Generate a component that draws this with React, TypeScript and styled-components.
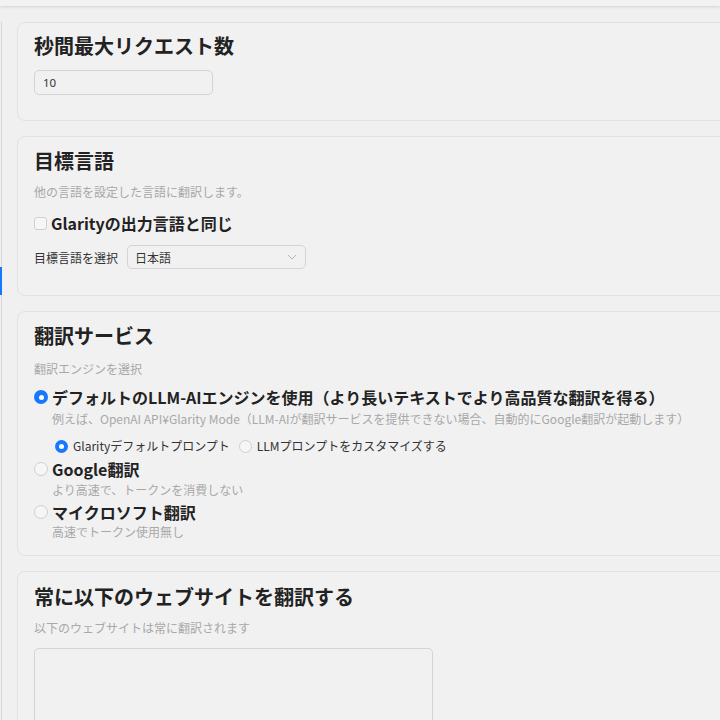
import React from "react";
import styled, { createGlobalStyle } from "styled-components";

const Global = createGlobalStyle`
  html, body { margin: 0; padding: 0; background: #f0f0f0; overflow: hidden; }
  body { font-family: "Noto Sans CJK JP", "Noto Sans", sans-serif; color: #222; }
`;

const Page = styled.div`
  width: 720px;
  height: 720px;
  overflow: hidden;
  display: flex;
  flex-direction: column;
  background: #f0f0f0;
`;

const TopBar = styled.div`
  height: 6px;
  flex: none;
  background: #f2f2f2;
  box-shadow: 0 1px 3px rgba(0, 0, 0, 0.12);
  position: relative;
  z-index: 1;
`;

const Body = styled.div`
  display: flex;
  flex: 1;
  padding-top: 16px;
`;

const Sidebar = styled.div`
  width: 1px;
  flex: none;
  border-right: 1px solid #d6d6d6;
  position: relative;
`;

const ActiveMark = styled.div`
  position: absolute;
  left: 0;
  top: 245px;
  width: 2px;
  height: 28px;
  background: #1677ff;
`;

const Main = styled.div`
  flex: none;
  width: 760px;
  padding-left: 15px;
  display: flex;
  flex-direction: column;
  gap: 15px;
`;

const Card = styled.section<{ $pt?: number; $pb: number }>`
  background: #f1f1f1;
  border: 1px solid #e2e2e2;
  border-radius: 8px;
  padding: ${(p) => p.$pt ?? 9}px 16px ${(p) => p.$pb}px;
  display: flex;
  flex-direction: column;
  align-items: flex-start;
`;

const Title = styled.h2`
  margin: 0;
  font-size: 20px;
  line-height: 28px;
  font-weight: 700;
  color: #222;
`;

const Desc = styled.p<{ $mt?: number; $indent?: boolean }>`
  margin: ${(p) => p.$mt ?? 8}px 0 0 ${(p) => (p.$indent ? 18 : 0)}px;
  font-size: 12px;
  line-height: 18px;
  color: #a8a8a8;
  white-space: nowrap;
`;

const TextInput = styled.div`
  margin-top: 10px;
  width: 179px;
  height: 25px;
  box-sizing: border-box;
  border: 1px solid #d4d4d4;
  border-radius: 5px;
  padding: 0 8px;
  display: flex;
  align-items: center;
  font-size: 11.5px;
  color: #333;
  font-family: "Noto Sans", sans-serif;
`;

const CheckRow = styled.label<{ $mt?: number }>`
  margin-top: ${(p) => p.$mt ?? 0}px;
  display: flex;
  align-items: center;
  gap: 4px;
  font-size: 16px;
  line-height: 22px;
  font-weight: 700;
  color: #222;
  white-space: nowrap;
`;

const Box = styled.span`
  width: 13px;
  height: 13px;
  box-sizing: border-box;
  border: 1px solid #cfcfcf;
  border-radius: 3px;
  background: #f6f6f6;
  flex: none;
`;

const SelectRow = styled.div`
  margin-top: 11px;
  display: flex;
  align-items: center;
  gap: 9px;
  font-size: 12px;
  color: #333;
`;

const Select = styled.div`
  width: 179px;
  height: 24px;
  box-sizing: border-box;
  border: 1px solid #d4d4d4;
  border-radius: 5px;
  padding: 0 8px 0 7px;
  display: flex;
  align-items: center;
  justify-content: space-between;
  font-size: 12px;
  color: #333;
`;

const Radio = styled.span<{ $on?: boolean; $size?: number }>`
  width: ${(p) => p.$size ?? 14}px;
  height: ${(p) => p.$size ?? 14}px;
  box-sizing: border-box;
  border-radius: 50%;
  flex: none;
  border: ${(p) => (p.$on ? "none" : "1px solid #cfcfcf")};
  background: ${(p) => (p.$on ? "#1677ff" : "#f6f6f6")};
  display: flex;
  align-items: center;
  justify-content: center;
  &::after {
    content: "";
    display: ${(p) => (p.$on ? "block" : "none")};
    width: 5px;
    height: 5px;
    border-radius: 50%;
    background: #fff;
  }
`;

const SubRow = styled.div`
  margin: 9px 0 0 21px;
  display: flex;
  align-items: center;
  font-size: 12px;
  line-height: 18px;
  color: #333;
  white-space: nowrap;
`;

const SubOption = styled.label`
  display: flex;
  align-items: center;
  gap: 5px;
  margin-right: 9px;
`;

const TextArea = styled.div`
  margin-top: 11px;
  width: 399px;
  height: 120px;
  box-sizing: border-box;
  border: 1px solid #d4d4d4;
  border-radius: 5px;
`;

const Chevron = () => (
  <svg width="10" height="6" viewBox="0 0 10 6" fill="none">
    <path d="M1 1l4 4 4-4" stroke="#b5b5b5" strokeWidth="1" />
  </svg>
);

export default function App() {
  return (
    <Page>
      <Global />
      <TopBar />
      <Body>
        <Sidebar>
          <ActiveMark />
        </Sidebar>
        <Main>
          <Card $pb={25}>
            <Title>秒間最大リクエスト数</Title>
            <TextInput>10</TextInput>
          </Card>

          <Card $pt={10} $pb={26}>
            <Title>目標言語</Title>
            <Desc>他の言語を設定した言語に翻訳します。</Desc>
            <CheckRow $mt={11}>
              <Box />
              Glarityの出力言語と同じ
            </CheckRow>
            <SelectRow>
              目標言語を選択
              <Select>
                日本語
                <Chevron />
              </Select>
            </SelectRow>
          </Card>

          <Card $pt={10} $pb={14}>
            <Title>翻訳サービス</Title>
            <Desc $mt={10}>翻訳エンジンを選択</Desc>
            <CheckRow $mt={8}>
              <Radio $on />
              デフォルトのLLM-AIエンジンを使用（より長いテキストでより高品質な翻訳を得る）
            </CheckRow>
            <Desc $mt={2} $indent>
              例えば、OpenAI API¥Glarity Mode（LLM-AIが翻訳サービスを提供できない場合、自動的にGoogle翻訳が起動します）
            </Desc>
            <SubRow>
              <SubOption>
                <Radio $on $size={13} />
                Glarityデフォルトプロンプト
              </SubOption>
              <SubOption>
                <Radio $size={13} />
                LLMプロンプトをカスタマイズする
              </SubOption>
            </SubRow>
            <CheckRow $mt={3}>
              <Radio />
              Google翻訳
            </CheckRow>
            <Desc $mt={1} $indent>
              より高速で、トークンを消費しない
            </Desc>
            <CheckRow $mt={2}>
              <Radio />
              マイクロソフト翻訳
            </CheckRow>
            <Desc $mt={0} $indent>
              高速でトークン使用無し
            </Desc>
          </Card>

          <Card $pt={11} $pb={14}>
            <Title>常に以下のウェブサイトを翻訳する</Title>
            <Desc $mt={8}>以下のウェブサイトは常に翻訳されます</Desc>
            <TextArea />
          </Card>
        </Main>
      </Body>
    </Page>
  );
}
